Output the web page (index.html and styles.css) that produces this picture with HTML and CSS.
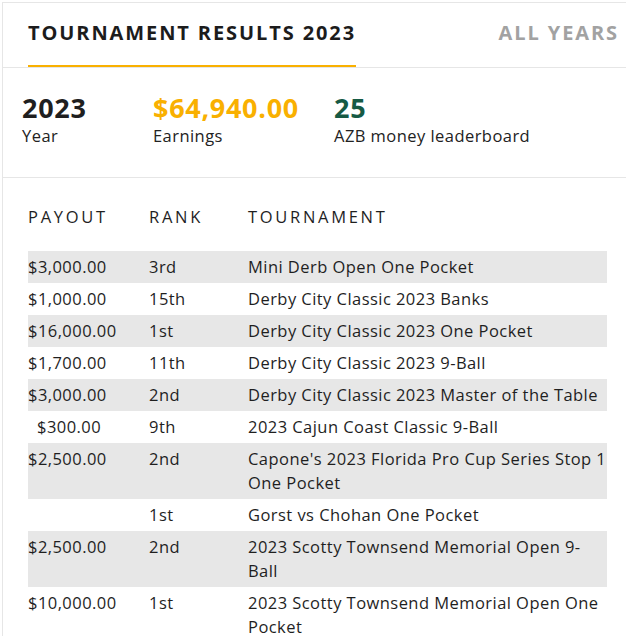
FILE: index.html
```html
<!DOCTYPE html>
<html lang="en">
<head>
<meta charset="utf-8">
<title>Tournament Results 2023</title>
<link rel="stylesheet" href="styles.css">
</head>
<body>
<div class="panel">
  <div class="tabs">
    <a class="tab active">TOURNAMENT RESULTS 2023</a>
    <a class="tab">ALL YEARS</a>
  </div>
  <div class="stats">
    <div class="stat">
      <div class="stat-value">2023</div>
      <div class="stat-label">Year</div>
    </div>
    <div class="stat">
      <div class="stat-value earnings">$64,940.00</div>
      <div class="stat-label">Earnings</div>
    </div>
    <div class="stat">
      <div class="stat-value rank">25</div>
      <div class="stat-label">AZB money leaderboard</div>
    </div>
  </div>
  <div class="results">
    <table class="results-table">
      <colgroup>
        <col class="col-payout">
        <col class="col-rank">
        <col class="col-tournament">
      </colgroup>
      <thead>
        <tr><th>PAYOUT</th><th>RANK</th><th>TOURNAMENT</th></tr>
      </thead>
      <tbody>
        <tr><td>$3,000.00</td><td>3rd</td><td>Mini Derb Open One Pocket</td></tr>
        <tr><td>$1,000.00</td><td>15th</td><td>Derby City Classic 2023 Banks</td></tr>
        <tr><td>$16,000.00</td><td>1st</td><td>Derby City Classic 2023 One Pocket</td></tr>
        <tr><td>$1,700.00</td><td>11th</td><td>Derby City Classic 2023 9-Ball</td></tr>
        <tr><td>$3,000.00</td><td>2nd</td><td>Derby City Classic 2023 Master of the Table</td></tr>
        <tr><td class="short">$300.00</td><td>9th</td><td>2023 Cajun Coast Classic 9-Ball</td></tr>
        <tr><td>$2,500.00</td><td>2nd</td><td>Capone's 2023 Florida Pro Cup Series Stop 1 One Pocket</td></tr>
        <tr><td></td><td>1st</td><td>Gorst vs Chohan One Pocket</td></tr>
        <tr><td>$2,500.00</td><td>2nd</td><td>2023 Scotty Townsend Memorial Open 9-Ball</td></tr>
        <tr><td>$10,000.00</td><td>1st</td><td>2023 Scotty Townsend Memorial Open One Pocket</td></tr>
      </tbody>
    </table>
  </div>
</div>
</body>
</html>
```
FILE: styles.css
```css
html, body {
  margin: 0;
  padding: 0;
  background: #ffffff;
}

body {
  font-family: "Open Sans", "DejaVu Sans", sans-serif;
  color: #1f1f1f;
  overflow: hidden;
}

.panel {
  margin: 2px 0 0 2px;
  border-top: 1px solid #e6e6e6;
  border-left: 1px solid #e6e6e6;
}

.tabs {
  display: flex;
  align-items: flex-end;
  padding: 0 7px 0 25px;
  border-bottom: 1px solid #e6e6e6;
}

.tab {
  display: block;
  font-size: 20px;
  font-weight: 700;
  line-height: 24px;
  letter-spacing: 1.9px;
  padding: 18px 0 20px;
  border-bottom: 2px solid transparent;
  color: #a2a2a2;
  white-space: nowrap;
}

.tab.active {
  color: #1c1c1c;
  border-bottom-color: #f9b000;
}

.tab + .tab {
  margin-left: auto;
}

.stats {
  display: grid;
  grid-template-columns: 131px 181px auto;
  padding: 23px 0 29px 19px;
  border-bottom: 1px solid #e6e6e6;
}

.stat-value {
  font-size: 27px;
  font-weight: 700;
  line-height: 33px;
  letter-spacing: 0.7px;
  color: #1f1f1f;
}

.stat-value.earnings {
  color: #f9b000;
}

.stat-value.rank {
  color: #165a44;
}

.stat-label {
  font-size: 16.5px;
  line-height: 24px;
  letter-spacing: 0.45px;
  color: #222222;
}

.results {
  padding-left: 25px;
}

.results-table {
  width: 579px;
  table-layout: fixed;
  border-collapse: collapse;
  font-size: 16.5px;
  line-height: 24px;
  letter-spacing: 0.45px;
}

.col-payout { width: 121px; }
.col-rank { width: 99px; }
.col-tournament { width: 359px; }

.results-table th {
  text-align: left;
  font-weight: 400;
  letter-spacing: 2.7px;
  padding: 27px 0 22px;
  color: #1f1f1f;
}

.results-table td {
  padding: 4px 0;
  vertical-align: top;
  color: #1f1f1f;
}

.results-table tbody tr:nth-child(odd) {
  background: #e7e7e7;
}

.results-table td.short {
  padding-left: 9px;
}
```
